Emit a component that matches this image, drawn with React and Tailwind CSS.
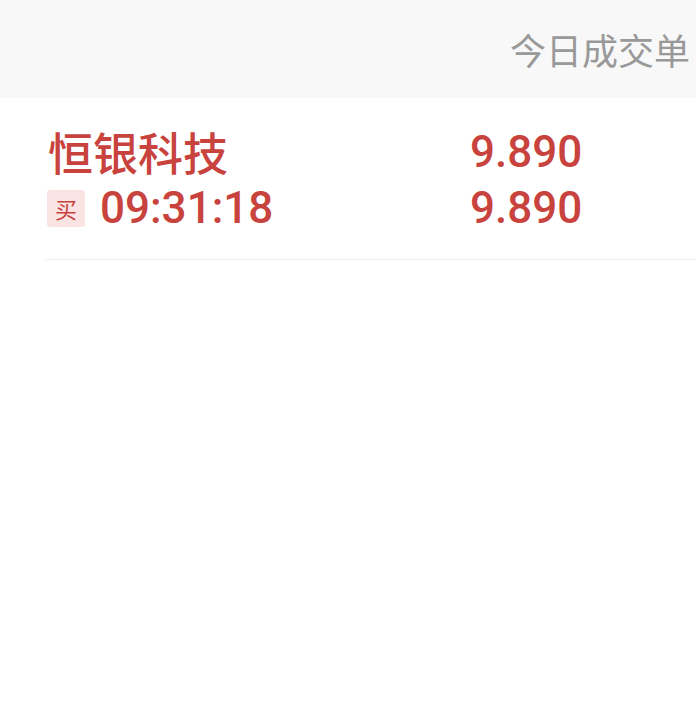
import React from 'react';

const cjk = { fontFamily: '"Noto Sans CJK SC", "Noto Sans", sans-serif' };

function Header() {
  return (
    <div className="flex h-[98px] items-center justify-end bg-[#f8f8f8] pr-[6px]">
      <span className="text-[36px] leading-none text-[#999999]" style={cjk}>
        今日成交单
      </span>
    </div>
  );
}

function TradeRow({ name, side, time, price, amount }) {
  return (
    <div className="ml-[46px] border-b border-[#eeeeee] pb-[23px] pt-[26px]">
      <div className="flex items-center">
        <div className="w-[424px] pl-[2px] text-[45px] font-medium leading-[56px] text-[#c8433d]" style={cjk}>
          {name}
        </div>
        <div className="text-[44px] font-medium leading-[56px] text-[#c8433d] [font-family:Roboto,sans-serif]">
          {price}
        </div>
      </div>
      <div className="flex items-center">
        <div className="flex w-[424px] items-center">
          <span
            className="mr-[15px] ml-[1px] flex h-[37px] w-[38px] items-center justify-center rounded-[3px] bg-[#fae3e3] text-[22px] leading-none text-[#c8433d]"
            style={cjk}
          >
            {side}
          </span>
          <span className="text-[44px] font-medium leading-[56px] text-[#c8433d] [font-family:Roboto,sans-serif]">
            {time}
          </span>
        </div>
        <div className="text-[44px] font-medium leading-[56px] text-[#c8433d] [font-family:Roboto,sans-serif]">
          {amount}
        </div>
      </div>
    </div>
  );
}

export default function App() {
  return (
    <div className="h-[705px] w-[696px] overflow-hidden bg-white">
      <Header />
      <TradeRow name="恒银科技" side="买" time="09:31:18" price="9.890" amount="9.890" />
    </div>
  );
}
